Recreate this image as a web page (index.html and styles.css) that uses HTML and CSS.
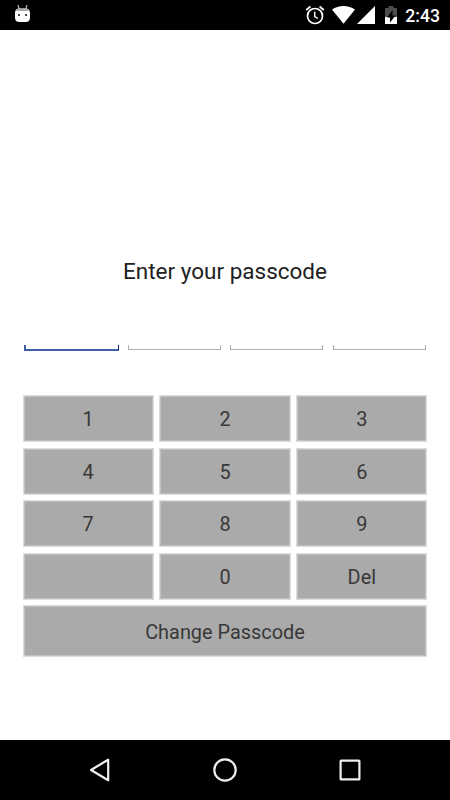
FILE: index.html
```html
<!DOCTYPE html>
<html lang="en">
<head>
<meta charset="UTF-8">
<meta name="viewport" content="width=device-width, initial-scale=1.0">
<title>Enter your passcode</title>
<link rel="stylesheet" href="styles.css">
</head>
<body>

<header class="status-bar">
    <svg class="android" width="17" height="19" viewBox="0 0 17 19">
        <path d="M4 0l1.200 4M13 0l-1.200 4" stroke="#bbb" stroke-width="1.2"/>
        <path d="M1 7.500Q1.500 3.500 5 3.500h7q3.500 0 4 4v5q0 4.500-4.500 4.500h-6Q1 17 1 12.500z" fill="#fff"/>
        <path d="M2 6q.7-2.500 3-2.500h7q2.300 0 3 2.500z" fill="#aaa"/>
        <path d="M4 9h2v2H4zM11 9h2v2h-2z" fill="#444"/>
    </svg>
    <div class="status-icons">
        <svg class="alarm" width="20" height="20" viewBox="0 0 20 20" fill="none" stroke="#fff">
            <circle cx="10" cy="11" r="7.500" stroke-width="1.700"/>
            <path d="M1.200 5l4.200-3.500M18.800 5l-4.200-3.500" stroke-width="1.700"/>
            <path d="M9.700 6.800v4.700l3.300 2" stroke-width="1.400"/>
        </svg>
        <svg class="wifi" width="23" height="18" viewBox="0 0 23 18">
            <path d="M0 3.500Q5 0 11.500 0T23 3.500L11.500 17.700z" fill="#fff"/>
        </svg>
        <svg class="signal" width="18" height="18" viewBox="0 0 18 18">
            <path d="M0 18L18 0v18z" fill="#fff"/>
        </svg>
        <svg class="battery" width="12" height="18" viewBox="0 0 12 18">
            <path d="M0 2h3.500V0h5v2H12v9H0z" fill="#4d4d4d"/>
            <path d="M0 11h12v7H0z" fill="#fff"/>
            <path d="M7.500 4L2 11.500H5V16.500L10.500 9.500H7.500z" fill="#000"/>
        </svg>
        <span class="clock">2:43</span>
    </div>
</header>

<main class="passcode">
    <h1>Enter your passcode</h1>
    <div class="digits">
        <span class="digit active"></span>
        <span class="digit"></span>
        <span class="digit"></span>
        <span class="digit"></span>
    </div>
    <div class="keypad">
        <button>1</button>
        <button>2</button>
        <button>3</button>
        <button>4</button>
        <button>5</button>
        <button>6</button>
        <button>7</button>
        <button>8</button>
        <button>9</button>
        <button></button>
        <button>0</button>
        <button>Del</button>
        <button class="change">Change Passcode</button>
    </div>
</main>

<nav class="nav-bar">
    <svg width="26" height="26" viewBox="0 0 26 26">
        <path d="M4 13L21.200 2.700v20.600z"/>
    </svg>
    <svg width="26" height="26" viewBox="0 0 26 26">
        <circle cx="13" cy="13" r="10.700"/>
    </svg>
    <svg width="26" height="26" viewBox="0 0 26 26">
        <rect x="3.600" y="3.600" width="18.800" height="18.800" rx=".5"/>
    </svg>
</nav>

</body>
</html>
```
FILE: styles.css
```css
* {
    box-sizing: border-box;
}
body {
    margin: 0;
    height: 800px;
    display: flex;
    flex-direction: column;
    background: #fff;
    font-family: Roboto, sans-serif;
    overflow: hidden;
}

/* Top bar */
.status-bar {
    height: 30px;
    padding: 0 10px 0 14px;
    display: flex;
    justify-content: space-between;
    background: #000;
    color: #fff;
}
.android {
    margin-top: 5px;
}
.status-icons {
    display: flex;
    align-items: flex-start;
}
.status-icons svg {
    margin-top: 6px;
}
.status-icons .alarm {
    margin-top: 5px;
    margin-right: 7px;
}
.wifi {
    margin-right: 2px;
}
.signal {
    margin-right: 10px;
}
.battery {
    margin-right: 8px;
}
.clock {
    font-size: 17.6px;
    font-weight: 500;
    line-height: 33px;
}

/* Passcode form */
.passcode {
    flex: 1;
    padding: 225px 22.5px 0;
}
.passcode h1 {
    margin: 0;
    font-size: 22.5px;
    font-weight: 400;
    line-height: 32px;
    text-align: center;
    color: #212121;
}
.digits {
    display: grid;
    grid-template-columns: 94.5px repeat(3, 1fr);
    gap: 9.5px;
    margin-top: 58px;
    padding: 0 2px 0 1.5px;
}
.digit {
    height: 5px;
    border: 1px solid #b0b0b0;
    border-top: 0;
}
.digit.active {
    height: 6px;
    border: 2px solid #405fa8;
    border-top: 0;
    border-right: 1px solid #101c80;
}
.keypad {
    display: grid;
    grid-template-columns: repeat(3, 1fr);
    grid-template-rows: repeat(4, 47px) 52px;
    gap: 5.5px;
    margin-top: 44px;
}
.keypad button {
    padding: 2px 0 0;
    background: #aaa;
    border: 1px solid #dcdcdc;
    box-shadow: inset 0 0 0 1px #c0c0c0;
    color: #383838;
    font-family: inherit;
    font-size: 19.9px;
}
.keypad .change {
    grid-column: 1 / -1;
}

/* Bottom bar */
.nav-bar {
    height: 60px;
    display: flex;
    justify-content: center;
    align-items: center;
    gap: 99px;
    background: #000;
}
.nav-bar svg {
    fill: none;
    stroke: #eee;
    stroke-width: 2.2;
    stroke-linejoin: round;
}
```
